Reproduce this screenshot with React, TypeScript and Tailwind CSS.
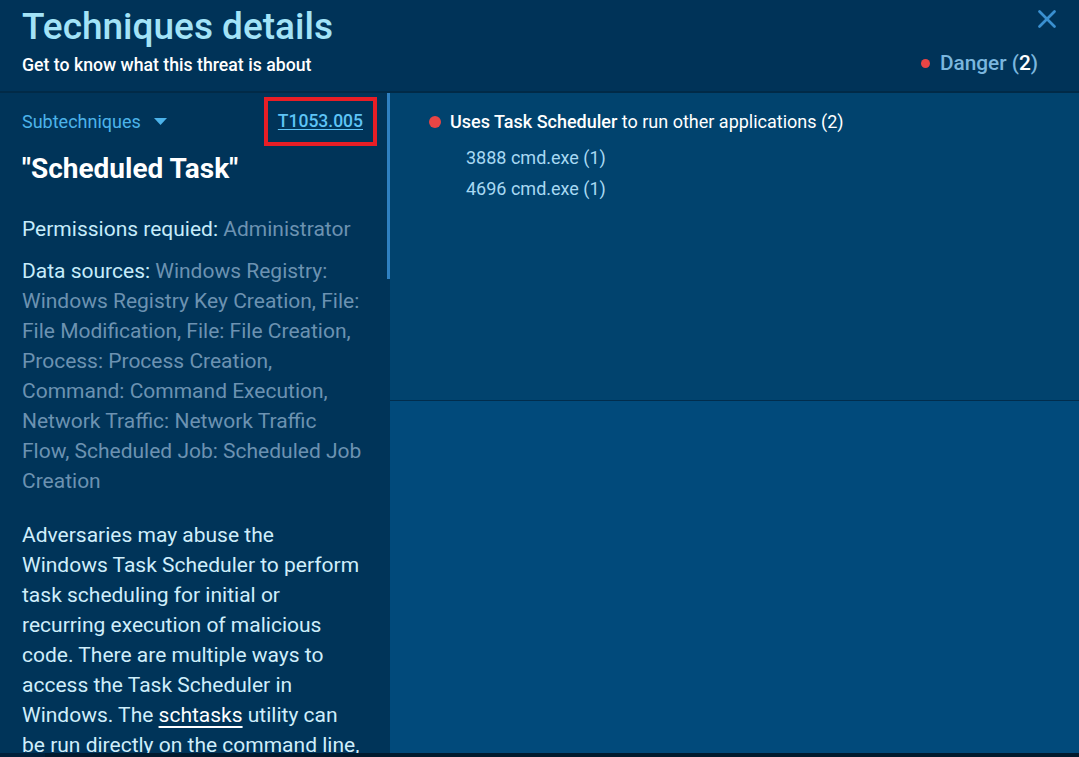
import { X } from "lucide-react";

const DATA_LINES = [
  "Windows Registry Key Creation, File:",
  "File Modification, File: File Creation,",
  "Process: Process Creation,",
  "Command: Command Execution,",
  "Network Traffic: Network Traffic",
  "Flow, Scheduled Job: Scheduled Job",
  "Creation",
];

const DESC_LINES = [
  "Adversaries may abuse the",
  "Windows Task Scheduler to perform",
  "task scheduling for initial or",
  "recurring execution of malicious",
  "code. There are multiple ways to",
  "access the Task Scheduler in",
];

const PROCESSES = ["3888 cmd.exe (1)", "4696 cmd.exe (1)"];

export default function App() {
  return (
    <div
      className="h-[757px] w-full flex flex-col bg-[#003358] overflow-hidden"
      style={{ fontFamily: "Roboto, 'Noto Sans', sans-serif" }}
    >
      {/* header */}
      <header className="h-[93px] shrink-0 flex justify-between border-b-2 border-[#012a47] pl-[22px] pr-[17px]">
        <div className="pt-[5px]">
          <h1 className="text-[37px] leading-[44px] font-medium text-[#a3e3f7]">Techniques details</h1>
          <p className="mt-[6px] text-[17.7px] leading-[20px] font-medium text-white">
            Get to know what this threat is about
          </p>
        </div>
        <div className="flex flex-col items-end">
          <button className="mt-[4px] text-[#3a90d0]">
            <X size={30} strokeWidth={2.2} />
          </button>
          <div className="mt-[17px] mr-[24px] flex items-center gap-[10px]">
            <span className="w-[9px] h-[9px] rounded-full bg-[#e84545]" />
            <span className="text-[20.8px] leading-[24px] font-medium text-[#7ab6de]">
              Danger (<span className="text-white">2</span>)
            </span>
          </div>
        </div>
      </header>

      <div className="flex-1 flex min-h-0">
        {/* left panel */}
        <aside className="w-[387px] shrink-0 bg-[#003459] px-[22px] pt-[4px] overflow-hidden">
          <div className="flex items-center justify-between">
            <button className="flex items-center gap-[13px] text-[18px] text-[#4cb3ea]">
              Subtechniques
              <svg width="13" height="7" viewBox="0 0 13 7">
                <path d="M0 0h13L6.5 7z" fill="#4cb3ea" />
              </svg>
            </button>
            <div className="-mr-[12px] border-4 border-[#e81e26] px-[10px] py-[8px]">
              <a className="text-[17.5px] leading-[25px] font-medium text-[#5ec4f6] underline underline-offset-2">
                T1053.005
              </a>
            </div>
          </div>
          <h2 className="mt-[6px] text-[28px] leading-[34px] font-bold text-white">"Scheduled Task"</h2>
          <p className="mt-[28px] text-[21px] leading-[30px] text-[#c6ecfb] whitespace-nowrap">
            Permissions requied: <span className="text-[#6c92b1]">Administrator</span>
          </p>
          <div className="mt-[12px] text-[21px] leading-[30px] text-[#6c92b1] whitespace-nowrap">
            <p>
              <span className="text-[#c6ecfb]">Data sources:</span> Windows Registry:
            </p>
            {DATA_LINES.map((l) => (
              <p key={l}>{l}</p>
            ))}
          </div>
          <div className="mt-[24px] text-[21px] leading-[30px] text-[#cfeefb] whitespace-nowrap">
            {DESC_LINES.map((l) => (
              <p key={l}>{l}</p>
            ))}
            <p>
              Windows. The <a className="text-white underline underline-offset-4">schtasks</a> utility can
            </p>
            <p>be run directly on the command line,</p>
          </div>
        </aside>

        {/* scrollbar */}
        <div className="w-[3px] shrink-0 bg-[#003459]">
          <div className="h-[186px] bg-[#2f80c1]" />
        </div>

        {/* right panel */}
        <main className="flex-1 flex flex-col">
          <section className="h-[308px] shrink-0 bg-[#01436e] border-b border-[#012d4d] pl-[39px] pt-[17px]">
            <div className="flex items-center gap-[9px]">
              <span className="w-[12px] h-[12px] rounded-full bg-[#e84545]" />
              <span className="text-[18px] leading-[24px] text-white">
                <span className="font-medium">Uses Task Scheduler</span> to run other applications (2)
              </span>
            </div>
            <ul className="mt-[12px] pl-[37px] flex flex-col gap-[7px]">
              {PROCESSES.map((p) => (
                <li key={p} className="text-[18px] leading-[24px] text-[#a8d9f3]">
                  {p}
                </li>
              ))}
            </ul>
          </section>
          <section className="flex-1 bg-[#014a7b]" />
        </main>
      </div>

      <div className="h-[4px] shrink-0 flex">
        <div className="w-[45px] bg-[#01203a]" />
        <div className="flex-1 bg-[#011a2e]" />
      </div>
    </div>
  );
}
